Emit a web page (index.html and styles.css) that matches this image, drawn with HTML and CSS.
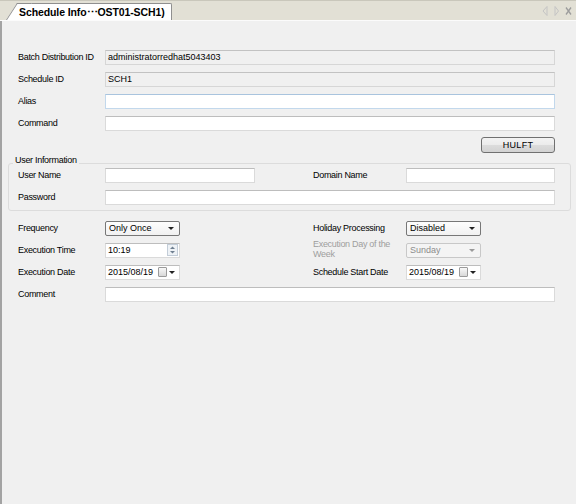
FILE: index.html
```html
<!DOCTYPE html>
<html lang="en">
<head>
    <meta charset="UTF-8">
    <title>Schedule Info</title>
    <link rel="stylesheet" href="styles.css">
</head>
<body>
    <div class="window">
        <div class="tabbar">
            <div class="tab">Schedule Info⋯OST01-SCH1)</div>
            <div class="tab-tools">
                <svg width="32" height="12" viewBox="0 0 32 12">
                    <path d="M6 1.5 L2 6 L6 10.5 Z" fill="none" stroke="#c4c4c4"/>
                    <path d="M14 1.5 L17.5 6 L14 10.5 Z" fill="none" stroke="#c4c4c4"/>
                    <path d="M25 2.5 L30 9.5 M30 2.5 L25 9.5" stroke="#9c9c9c" stroke-width="1.3"/>
                </svg>
            </div>
        </div>

        <div class="panel">
            <div class="row">
                <span class="label">Batch Distribution ID</span>
                <div class="field readonly">administratorredhat5043403</div>
            </div>
            <div class="row">
                <span class="label">Schedule ID</span>
                <div class="field readonly">SCH1</div>
            </div>
            <div class="row">
                <span class="label">Alias</span>
                <div class="field focus"></div>
            </div>
            <div class="row">
                <span class="label">Command</span>
                <div class="field"></div>
            </div>
            <div class="row actions">
                <button class="btn">HULFT</button>
            </div>

            <div class="group">
                <span class="group-title">User Information</span>
                <div class="row split">
                    <span class="label">User Name</span>
                    <div class="field short"></div>
                    <span class="label">Domain Name</span>
                    <div class="field"></div>
                </div>
                <div class="row">
                    <span class="label">Password</span>
                    <div class="field"></div>
                </div>
            </div>

            <div class="row split after-group">
                <span class="label">Frequency</span>
                <div class="select"><span>Only Once</span><span class="caret"></span></div>
                <span class="label">Holiday Processing</span>
                <div class="select"><span>Disabled</span><span class="caret"></span></div>
            </div>
            <div class="row split">
                <span class="label">Execution Time</span>
                <div class="field picker">
                    <span>10:19</span>
                    <svg class="spin" width="11" height="12" viewBox="0 0 11 12">
                        <rect x="0.5" y="0.5" width="10" height="11" fill="#eef2f6" stroke="#c3cdd8"/>
                        <path d="M3 5 L5.5 2.5 L8 5 Z" fill="#6f7f90"/>
                        <path d="M3 7 L5.5 9.5 L8 7 Z" fill="#6f7f90"/>
                    </svg>
                </div>
                <span class="label disabled">Execution Day of the Week</span>
                <div class="select off"><span>Sunday</span><span class="caret"></span></div>
            </div>
            <div class="row split">
                <span class="label">Execution Date</span>
                <div class="field picker">
                    <span>2015/08/19</span>
                    <span class="cal"><i class="cal-icon"></i><span class="caret"></span></span>
                </div>
                <span class="label">Schedule Start Date</span>
                <div class="field picker">
                    <span>2015/08/19</span>
                    <span class="cal"><i class="cal-icon"></i><span class="caret"></span></span>
                </div>
            </div>
            <div class="row">
                <span class="label">Comment</span>
                <div class="field"></div>
            </div>
        </div>
    </div>
</body>
</html>
```

FILE: styles.css
```css
body {
    margin: 0;
    font-family: "Liberation Sans", Arial, sans-serif;
    font-size: 9px;
    color: #000;
    background-color: #f0f0f0;
}
.window {
    width: 576px;
    height: 504px;
    display: flex;
    flex-direction: column;
    overflow: hidden;
}
.tabbar {
    flex: none;
    height: 21px;
    box-sizing: border-box;
    display: flex;
    align-items: flex-end;
    justify-content: space-between;
    background-color: #e2e0d5;
    border-top: 1px solid #c9c7bb;
    border-bottom: 1px solid #fbfbfb;
}
.tab {
    position: relative;
    z-index: 0;
    margin-left: 17px;
    height: 17px;
    box-sizing: border-box;
    padding: 0 6px 0 2px;
    background-color: #fff;
    border: 1px solid #8f8f8f;
    border-left: none;
    border-bottom: none;
    border-radius: 0 2px 0 0;
    font-size: 10.5px;
    font-weight: bold;
    letter-spacing: -0.1px;
    line-height: 16px;
    white-space: nowrap;
}
.tab::before {
    content: "";
    position: absolute;
    z-index: -1;
    top: -1px;
    bottom: 0;
    left: -11px;
    width: 14px;
    background-color: #fff;
    border-left: 1px solid #8f8f8f;
    border-top: 1px solid #8f8f8f;
    transform: skewX(-33deg);
    transform-origin: bottom left;
}
.tab-tools {
    align-self: center;
    margin-right: 3px;
    height: 12px;
}
.tab-tools svg {
    display: block;
}
.panel {
    flex: 1;
    border-left: 2px solid #a3a3a3;
    padding-top: 25px;
}
.row {
    display: grid;
    grid-template-columns: 87px 1fr;
    align-items: center;
    height: 22px;
    padding: 0 21px 0 16px;
}
.row.split {
    grid-template-columns: 87px 208px 93px 1fr;
}
.row.actions {
    display: flex;
    justify-content: flex-end;
    align-items: flex-start;
    padding-top: 3px;
    box-sizing: border-box;
}
.row.after-group {
    margin-top: 6px;
}
.label {
    white-space: nowrap;
    letter-spacing: -0.3px;
}
.label.disabled {
    color: #9e9e9e;
    white-space: normal;
    line-height: 10px;
    padding-right: 8px;
    margin-top: -2px;
}
.field {
    height: 15px;
    box-sizing: border-box;
    padding: 0 2px;
    line-height: 13px;
    background-color: #fff;
    border: 1px solid #dadada;
    border-top-color: #bdbdbd;
    white-space: nowrap;
    overflow: hidden;
}
.field.readonly {
    background-color: #f0f0f0;
    border-color: #d6d6d6;
    border-top-color: #c2c2c2;
}
.field.focus {
    border-color: #c2d8ec;
    border-top-color: #a9c4de;
}
.field.short {
    width: 150px;
}
.field.picker {
    width: 75px;
    display: flex;
    align-items: center;
    justify-content: space-between;
    padding-right: 1px;
}
.spin {
    display: block;
}
.cal {
    display: flex;
    align-items: center;
    gap: 2px;
    margin-right: 3px;
}
.cal-icon {
    display: block;
    width: 7px;
    height: 8px;
    border: 1px solid #9a9a9a;
    border-radius: 1px;
    background: linear-gradient(#f8f8f8, #d8d8d8);
}
.caret {
    display: block;
    width: 0;
    height: 0;
    border-left: 3px solid transparent;
    border-right: 3px solid transparent;
    border-top: 3px solid #222;
}
.select {
    width: 75px;
    height: 15px;
    box-sizing: border-box;
    display: flex;
    align-items: center;
    justify-content: space-between;
    padding: 0 5px 0 3px;
    border: 1px solid #777;
    border-radius: 2px;
    background: linear-gradient(#fdfdfd, #f1f1f1);
    line-height: 13px;
}
.select.off {
    border-color: #c8c8c8;
    color: #8c8c8c;
    background: #f4f4f4;
}
.select.off .caret {
    border-top-color: #9a9a9a;
}
.btn {
    width: 74px;
    height: 16px;
    padding: 0;
    font-family: inherit;
    font-size: 9px;
    letter-spacing: 0.3px;
    color: #000;
    border: 1px solid #707070;
    border-radius: 3px;
    background: linear-gradient(#f3f3f3 0%, #ebebeb 50%, #dcdcdc 51%, #d2d2d2 100%);
}
.group {
    position: relative;
    margin: 7px 5px 0 6px;
    padding: 0 15px 2px 9px;
    border: 1px solid #dcdcdc;
    border-radius: 3px;
}
.group .row {
    padding: 0;
}
.group-title {
    position: absolute;
    top: -10px;
    left: 4px;
    padding: 0 2px;
    line-height: 12px;
    letter-spacing: -0.3px;
    background-color: #f0f0f0;
}
```
